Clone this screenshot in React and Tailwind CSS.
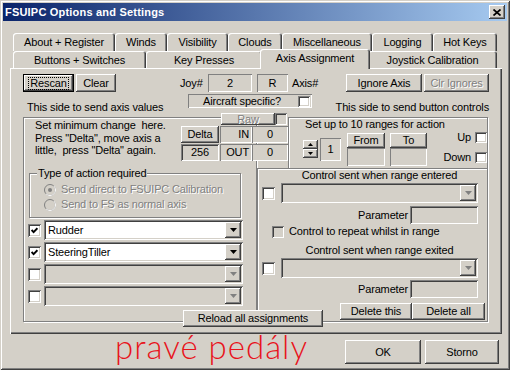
import React from "react";

const RAISED =
  "bg-[#d4d0c8] shadow-[inset_-1px_-1px_0_#404040,inset_1px_1px_0_#ffffff,inset_-2px_-2px_0_#808080,inset_2px_2px_0_#d4d0c8]";
const SUNKEN2 =
  "shadow-[inset_1px_1px_0_#808080,inset_-1px_-1px_0_#ffffff,inset_2px_2px_0_#404040,inset_-2px_-2px_0_#d4d0c8]";
const SUNKEN1 = "shadow-[inset_1px_1px_0_#808080,inset_-1px_-1px_0_#ffffff]";
const ETCHED =
  "border border-[#808080] shadow-[1px_1px_0_#ffffff,inset_1px_1px_0_#ffffff]";
const DIS = "text-[#808080] [text-shadow:1px_1px_0_#ffffff]";
const TABSH =
  "bg-[#d4d0c8] rounded-t-[3px] shadow-[inset_1px_1px_0_#ffffff,inset_-1px_0_0_#404040,inset_-2px_0_0_#808080]";

function Btn({ className = "", disabled, children }) {
  return (
    <div
      className={`${RAISED} flex items-center justify-center shrink-0 whitespace-nowrap ${
        disabled ? DIS : ""
      } ${className}`}
    >
      {children}
    </div>
  );
}

function Check({ checked, disabled, className = "w-[13px] h-[13px]" }) {
  return (
    <div
      className={`${SUNKEN2} ${
        disabled ? "bg-[#d4d0c8]" : "bg-white"
      } shrink-0 flex items-center justify-center ${className}`}
    >
      {checked && (
        <svg width="7" height="7" viewBox="0 0 7 7">
          <polyline
            points="0.6,3 2.6,5.2 6.4,1.2"
            fill="none"
            stroke="#000"
            strokeWidth="1.9"
          />
        </svg>
      )}
    </div>
  );
}

function Radio({ checked }) {
  return (
    <svg width="12" height="12" viewBox="0 0 12 12" className="shrink-0">
      <circle cx="6" cy="6" r="5.5" fill="#d4d0c8" stroke="#808080" />
      <path d="M9.9 2.1 A5.5 5.5 0 0 1 2.1 9.9" stroke="#ffffff" fill="none" />
      {checked && <circle cx="6" cy="6" r="2" fill="#808080" />}
    </svg>
  );
}

function Combo({ text, disabled, className = "" }) {
  return (
    <div
      className={`${SUNKEN2} ${
        disabled ? "bg-[#d4d0c8]" : "bg-white"
      } flex items-stretch shrink-0 h-[20px] p-[2px] ${className}`}
    >
      <span className="flex-1 pl-[2px] flex items-center">{text}</span>
      <div className={`${RAISED} w-[16px] flex items-center justify-center`}>
        <svg width="7" height="4" viewBox="0 0 7 4">
          <path d="M0 0h7L3.5 4z" fill={disabled ? "#808080" : "#000"} />
        </svg>
      </div>
    </div>
  );
}

const row1 = [
  ["About + Register", "w-[102px]"],
  ["Winds", "w-[52px]"],
  ["Visibility", "w-[61px]"],
  ["Clouds", "w-[54px]"],
  ["Miscellaneous", "w-[90px]"],
  ["Logging", "w-[61px]"],
  ["Hot Keys", "w-[64px]"],
];
const row2 = [
  ["Buttons + Switches", "w-[133px]"],
  ["Key Presses", "w-[116px]"],
  ["Axis Assignment", "w-[110px]", true],
  ["Joystick Calibration", "w-[129px]"],
];

function Tab({ label, w, selected }) {
  if (selected)
    return (
      <div
        className={`${w} ${TABSH} relative z-10 -mx-[2px] -mt-[2px] h-[20px] flex justify-center pt-[3px] shrink-0 whitespace-nowrap`}
      >
        {label}
      </div>
    );
  return (
    <div
      className={`${w} ${TABSH} h-full flex justify-center pt-[3px] shrink-0 whitespace-nowrap`}
    >
      {label}
    </div>
  );
}

export default function App() {
  return (
    <div className="w-[510px] h-[370px] overflow-hidden bg-[#d4d0c8] p-[3px] flex flex-col font-['Liberation_Sans',Arial,sans-serif] text-[11px] leading-[13px] tracking-[-0.15px] text-black shadow-[inset_1px_1px_0_#d4d0c8,inset_-1px_-1px_0_#404040,inset_2px_2px_0_#ffffff,inset_-2px_-2px_0_#808080]">
      {/* Title bar */}
      <div className="h-[18px] shrink-0 flex items-center bg-[linear-gradient(to_right,#0a246a,#a6caf0)]">
        <span className="ml-[2px] font-bold text-white tracking-[0.2px]">
          FSUIPC Options and Settings
        </span>
        <div
          className={`${RAISED} ml-auto mr-[2px] w-[16px] h-[14px] flex items-center justify-center`}
        >
          <svg width="8" height="7" viewBox="0 0 8 7">
            <path
              d="M0.5 0.5L7.5 6.5M7.5 0.5L0.5 6.5"
              stroke="#000"
              strokeWidth="1.7"
            />
          </svg>
        </div>
      </div>

      {/* Tabs */}
      <div className="mt-[12px] ml-[10px] flex h-[18px] shrink-0">
        {row1.map(([l, w]) => (
          <Tab key={l} label={l} w={w} />
        ))}
      </div>
      <div className="ml-[10px] flex h-[17px] shrink-0">
        {row2.map(([l, w, s]) => (
          <Tab key={l} label={l} w={w} selected={s} />
        ))}
      </div>

      {/* Panel */}
      <div className="ml-[7px] w-[492px] h-[266px] shrink-0 relative flex flex-col shadow-[inset_1px_1px_0_#ffffff,inset_-1px_-1px_0_#404040,inset_-2px_-2px_0_#808080]">
        {/* Row A */}
        <div className="mt-[6px] h-[18px] flex items-stretch">
          <div className="ml-[13px] w-[51px] border border-black shrink-0">
            <div className={`${RAISED} w-full h-full flex items-center justify-center`}>
              <span className="border border-dotted border-black px-[1px] leading-[11px]">
                Rescan
              </span>
            </div>
          </div>
          <Btn className="ml-[2px] w-[40px]">Clear</Btn>
          <span className="ml-[64px] w-[26px] flex items-center">Joy#</span>
          <div className={`${SUNKEN1} ml-[2px] w-[44px] flex items-center justify-center`}>2</div>
          <div className={`${SUNKEN1} ml-[5px] w-[31px] flex items-center justify-center`}>R</div>
          <span className="ml-[4px] w-[26px] flex items-center">Axis#</span>
          <Btn className="ml-[28px] w-[76px]">Ignore Axis</Btn>
          <Btn className="ml-[2px] w-[65px]" disabled>
            Clr Ignores
          </Btn>
        </div>

        {/* Row B */}
        <div className="h-[21px] flex items-start">
          <span className="ml-[17px] w-[161px] mt-[9px] whitespace-nowrap">
            This side to send axis values
          </span>
          <div className={`${SUNKEN1} mt-[2px] w-[124px] h-[14px] flex items-center`}>
            <span className="pl-[15px] whitespace-nowrap">Aircraft specific?</span>
            <Check className="ml-auto mr-[2px] w-[12px] h-[11px]" />
          </div>
          <span className="flex-1 text-right pr-[13px] mt-[9px] whitespace-nowrap">
            This side to send button controls
          </span>
        </div>

        {/* Row C */}
        <div className="relative flex h-[214px]">
          {/* Left group */}
          <div className={`${ETCHED} ml-[13px] mt-[4px] w-[234px] h-[205px] flex flex-col items-start shrink-0`}>
            <div className="ml-[11px] mt-[1px] h-[38px] leading-[12.5px] whitespace-pre">
              {"Set minimum change  here.\nPress \"Delta\", move axis a\nlittle,  press \"Delta\" again."}
            </div>
            <div className={`${ETCHED} ml-[5px] mt-[16px] w-[212px] h-[45px] flex flex-col items-start`}>
              <span className="-mt-[7px] ml-[7px] px-[1px] bg-[#d4d0c8] whitespace-nowrap">
                Type of action required
              </span>
              <div className="mt-[2px] h-[15px] flex items-center ml-[14px]">
                <Radio checked />
                <span className={`ml-[5px] whitespace-nowrap ${DIS}`}>
                  Send direct to FSUIPC Calibration
                </span>
              </div>
              <div className="h-[15px] flex items-center ml-[14px]">
                <Radio />
                <span className={`ml-[5px] whitespace-nowrap ${DIS}`}>
                  Send to FS as normal axis
                </span>
              </div>
            </div>
            <div className="mt-[2px] h-[20px] flex items-center">
              <div className="ml-[4px]"><Check checked /></div>
              <Combo className="ml-[3px] w-[199px]" text="Rudder" />
            </div>
            <div className="mt-[2px] h-[20px] flex items-center">
              <div className="ml-[4px]"><Check checked /></div>
              <Combo className="ml-[3px] w-[199px]" text="SteeringTiller" />
            </div>
            <div className="mt-[2px] h-[20px] flex items-center">
              <div className="ml-[4px]"><Check /></div>
              <Combo className="ml-[3px] w-[199px]" disabled />
            </div>
            <div className="mt-[2px] h-[20px] flex items-center">
              <div className="ml-[4px]"><Check /></div>
              <Combo className="ml-[3px] w-[199px]" disabled />
            </div>
          </div>

          {/* Right column */}
          <div className="w-[231px] flex flex-col shrink-0">
            <div className={`${ETCHED} border-b-0 ml-[31px] mt-[4px] w-[200px] h-[51px] flex flex-col`}>
              <span className="pl-[16px] whitespace-nowrap">Set up to 10 ranges for action</span>
              <div className="flex items-start">
                <div className="ml-[14px] mt-[9px] w-[15px] flex flex-col">
                  <Btn className="h-[9px] w-[15px]">
                    <svg width="5" height="3" viewBox="0 0 5 3"><path d="M0 3h5L2.5 0z" fill="#000" /></svg>
                  </Btn>
                  <Btn className="h-[9px] w-[15px]">
                    <svg width="5" height="3" viewBox="0 0 5 3"><path d="M0 0h5L2.5 3z" fill="#000" /></svg>
                  </Btn>
                </div>
                <div className={`${SUNKEN1} ml-[2px] mt-[7px] w-[21px] h-[23px] flex items-center justify-center`}>1</div>
                <div className="ml-[6px] mt-[2px] w-[38px] flex flex-col">
                  <Btn className="h-[15px] w-[38px]">From</Btn>
                  <div className={`${SUNKEN1} h-[18px]`} />
                </div>
                <div className="ml-[5px] mt-[2px] w-[37px] flex flex-col">
                  <Btn className="h-[15px] w-[37px]">To</Btn>
                  <div className={`${SUNKEN1} h-[18px]`} />
                </div>
                <div className="ml-auto flex flex-col items-end">
                  <div className="mt-[1px] h-[11px] flex items-center">
                    <span className="mr-[4px]">Up</span>
                    <Check className="w-[12px] h-[11px]" />
                  </div>
                  <div className="mt-[9px] h-[11px] flex items-center">
                    <span className="mr-[4px]">Down</span>
                    <Check className="w-[12px] h-[11px]" />
                  </div>
                </div>
              </div>
            </div>

            <div className={`${ETCHED} w-[231px] h-[154px] flex flex-col items-start`}>
              <span className="ml-[23px] w-[197px] text-center whitespace-nowrap">
                Control sent when range entered
              </span>
              <div className="mt-[1px] h-[20px] flex items-center">
                <div className="ml-[4px]"><Check /></div>
                <Combo className="ml-[6px] w-[197px]" disabled />
              </div>
              <div className="mt-[3px] h-[18px] flex items-stretch">
                <span className="ml-[23px] w-[127px] text-right flex items-center justify-end">Parameter</span>
                <div className={`${SUNKEN2} ml-[2px] w-[68px]`} />
              </div>
              <div className="mt-[1px] h-[13px] flex items-center">
                <div className="ml-[14px]"><Check disabled className="w-[12px] h-[12px]" /></div>
                <span className="ml-[5px] whitespace-nowrap">Control to repeat whilst in range</span>
              </div>
              <span className="mt-[6px] ml-[23px] w-[197px] text-center whitespace-nowrap">
                Control sent when range exited
              </span>
              <div className="mt-[1px] h-[20px] flex items-center">
                <div className="ml-[4px]"><Check /></div>
                <Combo className="ml-[6px] w-[197px]" disabled />
              </div>
              <div className="mt-[2px] h-[18px] flex items-stretch">
                <span className="ml-[23px] w-[127px] text-right flex items-center justify-end">Parameter</span>
                <div className={`${SUNKEN2} ml-[2px] w-[68px]`} />
              </div>
              <div className="mt-[5px] h-[17px] flex">
                <Btn className="ml-[82px] w-[72px]">Delete this</Btn>
                <Btn className="w-[73px]">Delete all</Btn>
              </div>
            </div>
          </div>

          {/* Delta / Raw block lying over the group edges */}
          <div className="absolute left-[171px] top-0 w-[107px] flex flex-col">
            <div className="ml-[40px] h-[12px] flex">
              <Btn className="w-[54px] h-[12px] leading-[10px]" disabled>
                Raw
              </Btn>
              <Check disabled className="w-[12px] h-[12px]" />
            </div>
            <div className="mt-[1px] h-[17px] flex">
              <Btn className="w-[38px] h-[17px]">Delta</Btn>
              <div className={`${SUNKEN1} bg-[#d4d0c8] ml-[1px] w-[32px] flex items-center justify-end pr-[3px]`}>IN</div>
              <div className={`${SUNKEN1} bg-[#d4d0c8] w-[36px] flex items-center justify-center`}>0</div>
            </div>
            <div className="mt-[1px] h-[17px] flex">
              <div className={`${SUNKEN2} bg-[#d4d0c8] w-[38px] flex items-center justify-center`}>256</div>
              <div className={`${SUNKEN1} bg-[#d4d0c8] ml-[1px] w-[32px] flex items-center justify-end pr-[3px]`}>OUT</div>
              <div className={`${SUNKEN1} bg-[#d4d0c8] w-[36px] flex items-center justify-center`}>0</div>
            </div>
          </div>

          {/* Reload button lying over both frames */}
          <Btn className="absolute left-[173px] top-[197px] w-[140px] h-[17px]">
            Reload all assignments
          </Btn>
        </div>
      </div>

      {/* Bottom row */}
      <div className="h-[33px] flex items-start shrink-0">
        <div className="ml-[112px] w-[230px] -mt-[4px] font-['Lato',sans-serif] font-light text-[33px] leading-[33px] tracking-[1px] text-[#e8141c] whitespace-nowrap">
          pravé pedály
        </div>
        <Btn className="mt-[6px] w-[76px] h-[24px]">OK</Btn>
        <Btn className="ml-[4px] mt-[6px] w-[74px] h-[24px]">Storno</Btn>
      </div>
    </div>
  );
}
